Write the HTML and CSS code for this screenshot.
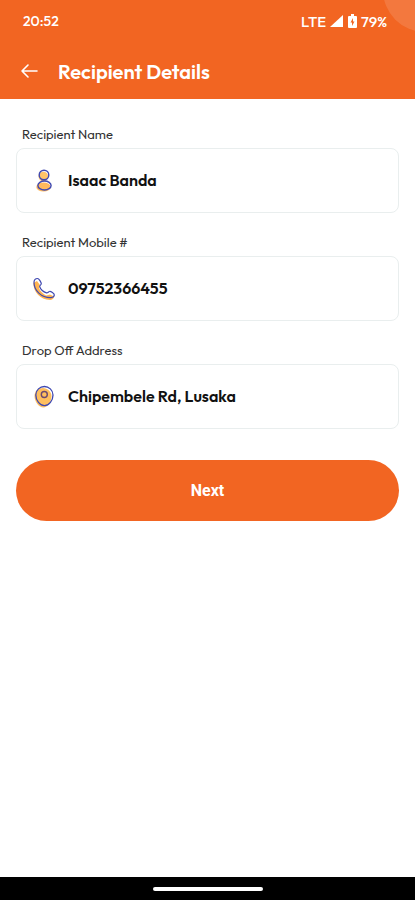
FILE: index.html
```html
<!DOCTYPE html>
<html lang="en">
<head>
<meta charset="utf-8">
<meta name="viewport" content="width=device-width, initial-scale=1">
<title>Recipient Details</title>
<link rel="stylesheet" href="styles.css">
</head>
<body>
<header class="header">
  <div class="status">
    <span>20:52</span>
    <div class="status-right">
      <span>LTE</span>
      <svg width="13" height="12" viewBox="0 0 13 12" aria-hidden="true"><path d="M13 0v12H0z" fill="#fff"/></svg>
      <svg class="battery" width="9" height="14" viewBox="0 0 9 14" aria-hidden="true"><path d="M3 0h3v2h2q1 0 1 1v10q0 1-1 1H1q-1 0-1-1V3q0-1 1-1h2z" fill="#fff"/><path d="M5 4L2.500 8.500H4V12L6.500 7.500H5z" fill="#f26522"/></svg>
      <span>79%</span>
    </div>
  </div>
  <div class="title-row">
    <button class="back" type="button" aria-label="Back">
      <svg width="18" height="16" viewBox="0 0 18 16" fill="none" stroke="#fff" stroke-width="1.600" stroke-linecap="round" stroke-linejoin="round" aria-hidden="true"><path d="M17 8H2M8 2L2 8l6 6"/></svg>
    </button>
    <h1>Recipient Details</h1>
  </div>
</header>
<main>
  <form class="form">
    <div class="field">
      <label for="name">Recipient Name</label>
      <div class="box">
        <svg width="24" height="24" viewBox="0 0 24 24" fill="none" aria-hidden="true">
          <circle cx="11.300" cy="7.500" r="4.800" fill="#ffc46a"/><ellipse cx="11.500" cy="18" rx="7.200" ry="4.600" fill="#ffb95c"/>
          <g stroke="#3f48b0" stroke-width="1.400"><circle cx="12" cy="6" r="4.800"/><ellipse cx="12.500" cy="16.500" rx="6.600" ry="4.500"/></g>
        </svg>
        <input id="name" type="text" value="Isaac Banda">
      </div>
    </div>
    <div class="field">
      <label for="mobile">Recipient Mobile #</label>
      <div class="box">
        <svg width="24" height="24" viewBox="0 0 24 24" fill="none" stroke-linejoin="round" aria-hidden="true">
          <path d="M1.300 6C1.500 15 8 22.500 18 23c2 0 4-1.500 4-3.500l-4-2-4 1C11 17 8 14 7 11l1-3-3-4z" fill="#ffb452"/>
          <path d="M2 5C1.800 13.500 9.500 21 19 20.700c1.500-.2 3.200-1.200 3.300-2.700.1-1.500-3.600-3.800-4.800-3.500-1.200.2-1.700 1.700-3 1.400C11.500 15 8.500 12 7.700 9.800c-.4-1.400 1.500-1.700 1.600-3C9.300 5.300 7 1.500 5.500 1.500 3.800 1.500 2.200 3 2 5z" stroke="#3f48b0" stroke-width="1.200"/>
        </svg>
        <input id="mobile" type="tel" value="09752366455">
      </div>
    </div>
    <div class="field">
      <label for="address">Drop Off Address</label>
      <div class="box">
        <svg width="24" height="24" viewBox="0 0 24 24" fill="none" aria-hidden="true">
          <path d="M2.500 11c0-5 4-8 8.500-8s8.500 4 8.500 8c0 6-4 11.500-8.200 11.500S2.500 17 2.500 11z" fill="#ffbf5e"/>
          <path d="M3.800 10C3.800 5 8 1.500 12.400 1.500S21 5 21 10C21 15.500 17 20.700 12.500 20.700S3.800 15.500 3.800 10z" stroke="#3f48b0" stroke-width="1.300"/>
          <circle cx="12.300" cy="9.500" r="3" stroke="#6b4a70" stroke-width="1.400"/>
        </svg>
        <input id="address" type="text" value="Chipembele Rd, Lusaka">
      </div>
    </div>
    <button class="next" type="button">Next</button>
  </form>
</main>
<footer class="nav"><div class="handle"></div></footer>
</body>
</html>
```
FILE: styles.css
```css
* {
  box-sizing: border-box;
}

body {
  margin: 0;
  min-height: 100vh;
  display: flex;
  flex-direction: column;
  background: #fff;
  color: #111;
  font-family: Outfit, Lato, sans-serif;
}

.header {
  position: relative;
  overflow: hidden;
  padding: 11px 28px 12px 20px;
  background: #f26522;
  color: #fff;
}

.header::after {
  content: "";
  position: absolute;
  top: -52px;
  right: -52px;
  width: 84px;
  height: 84px;
  border-radius: 50%;
  background: rgba(255, 255, 255, 0.13);
}

.status {
  display: flex;
  justify-content: space-between;
  align-items: center;
  height: 20px;
  padding-left: 3px;
  font-size: 14px;
  font-weight: 500;
}

.status-right {
  display: flex;
  align-items: center;
  gap: 4px;
  font-size: 15px;
}

.battery {
  margin-left: 1px;
}

.title-row {
  display: flex;
  align-items: center;
  gap: 20px;
  height: 32px;
  margin-top: 24px;
}

.back {
  display: flex;
  padding: 0;
  border: 0;
  background: none;
}

h1 {
  margin: 0;
  font-size: 20px;
  font-weight: 600;
}

main {
  flex: 1;
  padding: 25px 16px;
}

.form {
  display: flex;
  flex-direction: column;
  gap: 19px;
}

label {
  display: block;
  height: 24px;
  padding-left: 6px;
  font-size: 13px;
  line-height: 20px;
  color: #333;
}

.box {
  display: flex;
  align-items: center;
  gap: 12px;
  height: 65px;
  padding: 0 15px;
  border: 1px solid #e9eeee;
  border-radius: 8px;
}

input {
  flex: 1;
  min-width: 0;
  padding: 0 0 2px;
  border: 0;
  outline: 0;
  background: none;
  color: #111;
  font: 600 16px Outfit, Lato, sans-serif;
}

.next {
  height: 61px;
  margin-top: 12px;
  border: 0;
  border-radius: 31px;
  background: #f26522;
  color: #fff;
  font: 700 16px Roboto, sans-serif;
}

.nav {
  display: flex;
  align-items: center;
  justify-content: center;
  height: 23px;
  background: #000;
}

.handle {
  width: 110px;
  height: 4px;
  border-radius: 2px;
  background: #fff;
}
```
